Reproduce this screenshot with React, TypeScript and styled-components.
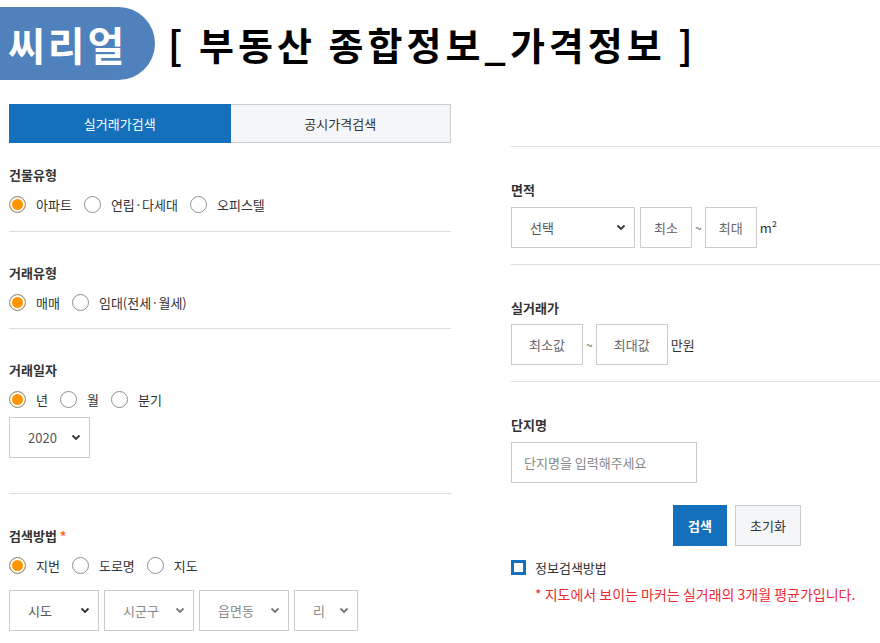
import React from "react";
import styled, { createGlobalStyle } from "styled-components";

const GlobalStyle = createGlobalStyle`
  html, body {
    margin: 0;
    padding: 0;
    background: #fff;
    overflow: hidden;
  }
  body {
    font-family: "Noto Sans CJK KR", "Noto Sans", sans-serif;
    color: #333;
  }
  * { box-sizing: border-box; }
`;

const Page = styled.div`
  width: 880px;
  height: 643px;
  overflow: hidden;
`;

const Header = styled.header`
  display: flex;
  align-items: center;
  padding-top: 7px;
  height: 80px;
`;

const Badge = styled.div`
  width: 155px;
  height: 73px;
  background: #4f81bd;
  border-radius: 0 37px 37px 0;
  color: #fff;
  font-size: 40px;
  font-weight: 700;
  letter-spacing: 3px;
  padding-left: 8px;
  display: flex;
  align-items: center;
`;

const Title = styled.h1`
  margin: 0 0 0 13px;
  font-size: 38px;
  font-weight: 700;
  color: #000;
  letter-spacing: 4px;
  white-space: nowrap;
`;

const Columns = styled.div`
  display: flex;
  align-items: flex-start;
`;

const LeftCol = styled.div`
  width: 442px;
  margin-left: 9px;
  padding-top: 24px;
`;

const RightCol = styled.div`
  width: 369px;
  margin-left: 60px;
  padding-top: 66px;
`;

const Tabs = styled.div`
  display: flex;
  height: 39px;
`;

const Tab = styled.div<{ $active?: boolean }>`
  flex: 1;
  display: flex;
  align-items: center;
  justify-content: center;
  font-size: 13px;
  background: ${(p) => (p.$active ? "#1470bb" : "#f5f6f8")};
  color: ${(p) => (p.$active ? "#fff" : "#333")};
  border: 1px solid ${(p) => (p.$active ? "#1470bb" : "#c9ccd3")};
  border-left: ${(p) => (p.$active ? "1px solid #1470bb" : "none")};
`;

const Section = styled.section<{ $pt: number; $pb: number; $line?: boolean }>`
  padding: ${(p) => p.$pt}px 0 ${(p) => p.$pb}px;
  border-bottom: ${(p) => (p.$line ? "1px solid #ddd" : "none")};
`;

const TopLine = styled.div`
  border-top: 1px solid #ddd;
`;

const Label = styled.div`
  font-size: 13px;
  font-weight: 700;
  line-height: 20px;
  color: #333;
`;

const Star = styled.span`
  color: #f26b1d;
  margin-left: 3px;
`;

const RadioRow = styled.div`
  display: flex;
  align-items: center;
  height: 20px;
  margin-top: 9px;
`;

const RadioItem = styled.label`
  display: flex;
  align-items: center;
  font-size: 13px;
  color: #333;
  margin-right: 12px;
`;

const Circle = styled.span<{ $on?: boolean }>`
  width: 17px;
  height: 17px;
  border-radius: 50%;
  border: 1px solid #8f8f8f;
  background: ${(p) => (p.$on ? "#ff9600" : "#fff")};
  box-shadow: ${(p) => (p.$on ? "inset 0 0 0 2px #fff" : "none")};
  margin-right: 10px;
  flex-shrink: 0;
`;

const Row = styled.div<{ $mt: number }>`
  display: flex;
  align-items: center;
  gap: 5px;
  margin-top: ${(p) => p.$mt}px;
`;

const SelectBox = styled.div<{ $w: number; $muted?: boolean }>`
  width: ${(p) => p.$w}px;
  height: 41px;
  border: 1px solid #ccc;
  display: flex;
  align-items: center;
  justify-content: space-between;
  padding: 0 8px 0 18px;
  font-size: 13px;
  color: ${(p) => (p.$muted ? "#888" : "#555")};
  background: #fff;
`;

const Field = styled.div<{ $w: number }>`
  width: ${(p) => p.$w}px;
  height: 41px;
  border: 1px solid #ccc;
  display: flex;
  align-items: center;
  justify-content: center;
  font-size: 13px;
  color: #666;
`;

const TextField = styled(Field)`
  justify-content: flex-start;
  padding-left: 12px;
  color: #888;
`;

const Tilde = styled.span`
  font-size: 12px;
  color: #555;
  margin: 0 -2px;
`;

const Unit = styled.span`
  font-size: 13px;
  color: #333;
  margin-left: -2px;
`;

const Buttons = styled.div`
  display: flex;
  gap: 8px;
  margin: 22px 0 0 162px;
`;

const Button = styled.button<{ $primary?: boolean }>`
  height: 41px;
  padding: 0;
  width: ${(p) => (p.$primary ? 54 : 66)}px;
  font-family: inherit;
  font-size: 13px;
  font-weight: ${(p) => (p.$primary ? 700 : 400)};
  color: ${(p) => (p.$primary ? "#fff" : "#333")};
  background: ${(p) => (p.$primary ? "#1470bb" : "#f5f6f8")};
  border: 1px solid ${(p) => (p.$primary ? "#1470bb" : "#c9ccd3")};
`;

const InfoRow = styled.div`
  display: flex;
  align-items: center;
  margin-top: 12px;
  font-size: 13px;
  color: #333;
`;

const Check = styled.span`
  width: 15px;
  height: 15px;
  border: 3px solid #1470bb;
  margin-right: 9px;
`;

const Note = styled.p`
  margin: 7px 0 0 24px;
  font-size: 14px;
  color: #ec2a32;
  white-space: nowrap;
`;

const Chevron = ({ color = "#333" }: { color?: string }) => (
  <svg width="10" height="7" viewBox="0 0 10 7">
    <path d="M1.5 1.5 L5 5 L8.5 1.5" fill="none" stroke={color} strokeWidth="1.8" />
  </svg>
);

const Radios = ({ items }: { items: string[] }) => (
  <RadioRow>
    {items.map((t, i) => (
      <RadioItem key={t}>
        <Circle $on={i === 0} />
        {t}
      </RadioItem>
    ))}
  </RadioRow>
);

export default function App() {
  return (
    <Page>
      <GlobalStyle />
      <Header>
        <Badge>씨리얼</Badge>
        <Title>[ 부동산 종합정보_가격정보 ]</Title>
      </Header>
      <Columns>
        <LeftCol>
          <Tabs>
            <Tab $active>실거래가검색</Tab>
            <Tab>공시가격검색</Tab>
          </Tabs>
          <Section $pt={22} $pb={17} $line>
            <Label>건물유형</Label>
            <Radios items={["아파트", "연립·다세대", "오피스텔"]} />
          </Section>
          <Section $pt={31} $pb={16} $line>
            <Label>거래유형</Label>
            <Radios items={["매매", "임대(전세·월세)"]} />
          </Section>
          <Section $pt={31} $pb={35} $line>
            <Label>거래일자</Label>
            <Radios items={["년", "월", "분기"]} />
            <Row $mt={8}>
              <SelectBox $w={81}>
                2020
                <Chevron />
              </SelectBox>
            </Row>
          </Section>
          <Section $pt={32} $pb={0}>
            <Label>
              검색방법<Star>*</Star>
            </Label>
            <Radios items={["지번", "도로명", "지도"]} />
            <Row $mt={15}>
              <SelectBox $w={90}>
                시도
                <Chevron />
              </SelectBox>
              <SelectBox $w={90} $muted>
                시군구
                <Chevron color="#777" />
              </SelectBox>
              <SelectBox $w={90} $muted>
                읍면동
                <Chevron color="#777" />
              </SelectBox>
              <SelectBox $w={64} $muted>
                리
                <Chevron color="#777" />
              </SelectBox>
            </Row>
          </Section>
        </LeftCol>
        <RightCol>
          <TopLine />
          <Section $pt={33} $pb={16} $line>
            <Label>면적</Label>
            <Row $mt={7}>
              <SelectBox $w={124}>
                선택
                <Chevron />
              </SelectBox>
              <Field $w={52}>최소</Field>
              <Tilde>~</Tilde>
              <Field $w={52}>최대</Field>
              <Unit>m²</Unit>
            </Row>
          </Section>
          <Section $pt={33} $pb={16} $line>
            <Label>실거래가</Label>
            <Row $mt={6}>
              <Field $w={72}>최소값</Field>
              <Tilde>~</Tilde>
              <Field $w={72}>최대값</Field>
              <Unit>만원</Unit>
            </Row>
          </Section>
          <Section $pt={33} $pb={0}>
            <Label>단지명</Label>
            <Row $mt={7}>
              <TextField $w={186}>단지명을 입력해주세요</TextField>
            </Row>
          </Section>
          <Buttons>
            <Button $primary>검색</Button>
            <Button>초기화</Button>
          </Buttons>
          <InfoRow>
            <Check />
            정보검색방법
          </InfoRow>
          <Note>* 지도에서 보이는 마커는 실거래의 3개월 평균가입니다.</Note>
        </RightCol>
      </Columns>
    </Page>
  );
}
